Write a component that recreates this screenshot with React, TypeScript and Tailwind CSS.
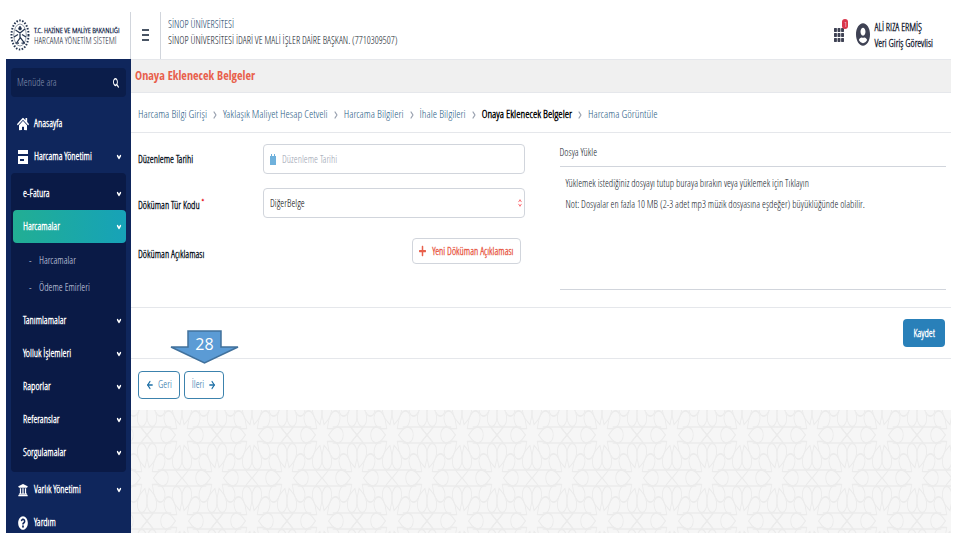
import React, { useState } from 'react';
import { FaSearch, FaHome, FaUniversity, FaQuestionCircle, FaUserCircle, FaPlus, FaTh } from 'react-icons/fa';
import { ArrowLeft, ArrowRight, ChevronDown, ChevronRight, ChevronsUpDown } from 'lucide-react';

const steps = [
  'Harcama Bilgi Girişi',
  'Yaklaşık Maliyet Hesap Cetveli',
  'Harcama Bilgileri',
  'İhale Bilgileri',
  'Onaya Eklenecek Belgeler',
  'Harcama Görüntüle',
];

const subMenus = ['Tanımlamalar', 'Yolluk İşlemleri', 'Raporlar', 'Referanslar', 'Sorgulamalar'];

function Emblem() {
  return (
    <svg viewBox="0 0 40 64" preserveAspectRatio="none" className="h-8 w-5 shrink-0" fill="none" stroke="#24344f">
      <ellipse cx="20" cy="32" rx="17" ry="29" strokeWidth="4" strokeDasharray="3 3" />
      <ellipse cx="20" cy="32" rx="12.5" ry="22" strokeWidth="1" />
      <path d="M20 14v8M11 22l9 6 10-8M20 26v12l-7 10M20 36l9 12M8 36l8-5M32 36l-8-5M11 48h7M23 48h7" strokeWidth="2.5" />
      <circle cx="20" cy="19" r="3" fill="#24344f" />
    </svg>
  );
}

function CardIcon() {
  return (
    <svg viewBox="0 0 10 14" preserveAspectRatio="none" className="h-3.5 w-2.5" fill="#fff">
      <path d="M0 0h10v4H0z" />
      <path fillRule="evenodd" d="M0 6h10v8H0zM2 9v2h4V9z" />
    </svg>
  );
}

type MenuRowProps = {
  label: string;
  icon?: React.ReactNode;
  active?: boolean;
  expandable?: boolean;
};

function MenuRow({ label, icon, active, expandable = true }: MenuRowProps) {
  return (
    <a
      href="#"
      className={`flex h-[33px] items-center pr-1 text-[10px] font-bold text-white ${icon ? 'pl-1.5' : 'pl-2.5'} ${
        active ? 'rounded-sm bg-gradient-to-r from-[#22ae93] to-[#17a2b8]' : ''
      }`}
    >
      {icon && <span className="mr-[5px] flex w-3 justify-center">{icon}</span>}
      <span className="flex-1">{label}</span>
      {expandable && <ChevronDown className="h-2.5 w-1.5" strokeWidth={5} preserveAspectRatio="none" />}
    </a>
  );
}

function Sidebar() {
  return (
    <aside className="w-[125px] shrink-0 overflow-hidden bg-[#0f265c] px-[5px] pt-[9px]">
      <div className="mb-2.5 flex h-[29px] items-center rounded-sm bg-[#0b1d4a] pl-1.5 pr-[7px]">
        <input
          type="text"
          aria-label="Menüde ara"
          placeholder="Menüde ara"
          className="min-w-0 flex-1 bg-transparent text-[10px] text-white outline-none placeholder:text-[#8592b0]"
        />
        <button type="button" aria-label="Ara">
          <FaSearch className="h-2.5 w-1.5 text-white" preserveAspectRatio="none" />
        </button>
      </div>
      <nav>
        <MenuRow
          label="Anasayfa"
          icon={<FaHome className="h-3.5 w-3 text-white" preserveAspectRatio="none" />}
          expandable={false}
        />
        <MenuRow label="Harcama Yönetimi" icon={<CardIcon />} />
        <div className="mb-px rounded-sm bg-[#0a1a46] pb-[3px] pl-0.5 pt-1">
          <MenuRow label="e-Fatura" />
          <MenuRow label="Harcamalar" active />
          <ul className="pb-[3px] pt-1 text-[10px] text-[#d5dbe8]">
            {['Harcamalar', 'Ödeme Emirleri'].map((item) => (
              <li key={item}>
                <a href="#" className="flex h-[27px] items-center pl-4">
                  <span className="w-2.5">-</span>
                  {item}
                </a>
              </li>
            ))}
          </ul>
          {subMenus.map((m) => (
            <MenuRow key={m} label={m} />
          ))}
        </div>
        <MenuRow
          label="Varlık Yönetimi"
          icon={<FaUniversity className="h-3.5 w-2.5 text-white" preserveAspectRatio="none" />}
        />
        <MenuRow
          label="Yardım"
          icon={<FaQuestionCircle className="h-3.5 w-2.5 text-white" preserveAspectRatio="none" />}
          expandable={false}
        />
      </nav>
    </aside>
  );
}

function Header() {
  return (
    <header className="flex h-[47px] shrink-0 items-stretch">
      <div className="flex w-[125px] shrink-0 items-center gap-1 whitespace-nowrap border-r border-gray-300 pb-0.5 pl-1">
        <Emblem />
        <div className="leading-[11px]">
          <div className="text-[8px] font-bold text-[#14264a]">T.C. HAZİNE VE MALİYE BAKANLIĞI</div>
          <div className="text-[9px] text-gray-800">HARCAMA YÖNETİM SİSTEMİ</div>
        </div>
      </div>
      <button
        type="button"
        aria-label="Menü"
        className="flex w-[30px] shrink-0 flex-col items-center justify-center gap-[3px] border-r border-gray-300 pb-0.5"
      >
        <span className="h-0.5 w-[7px] bg-gray-600" />
        <span className="h-0.5 w-[7px] bg-gray-600" />
        <span className="h-0.5 w-[7px] bg-gray-600" />
      </button>
      <div className="flex-1 pl-[7px] pt-1 text-[10px] leading-4">
        <div className="text-[#123e66]">SİNOP ÜNİVERSİTESİ</div>
        <div className="text-gray-900">SİNOP ÜNİVERSİTESİ İDARİ VE MALİ İŞLER DAİRE BAŞKAN. (7710309507)</div>
      </div>
      <div className="flex items-center gap-3 pb-0.5 pr-[18px]">
        <button type="button" aria-label="Uygulamalar" className="relative">
          <FaTh className="h-4 w-2.5 text-[#3f4254]" preserveAspectRatio="none" />
          <span className="absolute -right-1 -top-2 flex h-2.5 w-1.5 items-center justify-center rounded-full bg-[#d9364c] text-[8px] text-white">
            1
          </span>
        </button>
        <button type="button" className="flex items-center gap-1 text-left text-[10px] leading-4 text-gray-800">
          <FaUserCircle className="h-[23px] w-3.5 text-[#3f4254]" preserveAspectRatio="none" />
          <span className="block">
            <span className="block font-bold">ALİ RIZA ERMİŞ</span>
            <span className="block font-bold">Veri Giriş Görevlisi</span>
          </span>
        </button>
      </div>
    </header>
  );
}

// Ten-fold rosettes on a rhombic lattice
function Pattern() {
  const centers = [[0, 0], [70, 0], [35, 43], [0, 86], [70, 86]];
  const turns = [0, 36, 72, 108, 144, 180, 216, 252, 288, 324];
  return (
    <svg className="h-full w-full" aria-hidden="true">
      <defs>
        <pattern id="stars" width="70" height="86" x="51" y="25" patternUnits="userSpaceOnUse">
          {centers.map(([x, y]) => (
            <g
              key={x + '-' + y}
              transform={`translate(${x} ${y}) scale(0.59 1)`}
              fill="none"
              stroke="#ebebeb"
              strokeWidth="1.5"
            >
              <path d="M-60 -8H-18M18 -8H60M-60 8H-18M18 8H60" />
              <path d="M48 -8L70 8M48 8L70 -8M-48 -8L-70 8M-48 8L-70 -8" />
              {turns.map((a) => (
                <path
                  key={a}
                  transform={`rotate(${a})`}
                  d="M11 0L19 -6Q23 -8 28 -8Q36 -6 36 0Q36 6 28 8Q23 8 19 6Z"
                />
              ))}
            </g>
          ))}
        </pattern>
      </defs>
      <rect width="100%" height="100%" fill="#f6f6f6" />
      <rect width="100%" height="100%" fill="url(#stars)" />
    </svg>
  );
}

function FormPanel() {
  const [date, setDate] = useState('');
  return (
    <form className="flex flex-col" onSubmit={(e) => e.preventDefault()}>
      <div className="flex h-[175px] gap-[35px] border-b border-gray-200 pl-[7px] pr-[5px]">
        <div className="flex min-w-0 flex-1 flex-col pt-[11px] text-[10px] text-gray-900">
          <div className="mb-3.5 flex h-[30px] items-center">
            <label htmlFor="tarih" className="w-[125px] font-bold">Düzenleme Tarihi</label>
            <div className="flex h-full flex-1 items-center gap-1.5 rounded-sm border border-gray-300 px-1.5">
              <svg viewBox="0 0 6 11" className="h-[11px] w-1.5" fill="#6fb1dc">
                <path d="M0 2h1V0h1v2h2V0h1v2h1v9H0z" />
              </svg>
              <input
                id="tarih"
                type="text"
                placeholder="Düzenleme Tarihi"
                value={date}
                onChange={(e) => setDate(e.target.value)}
                className="min-w-0 flex-1 outline-none placeholder:text-gray-400"
              />
            </div>
          </div>
          <div className="mb-5 flex h-[30px] items-center">
            <label htmlFor="tur" className="w-[125px] pt-1 font-bold">
              Döküman Tür Kodu <sup className="text-red-600">*</sup>
            </label>
            <div className="relative h-full flex-1">
              <select id="tur" className="h-full w-full appearance-none rounded-sm border border-gray-300 px-1.5 text-black">
                <option>DiğerBelge</option>
              </select>
              <ChevronsUpDown
                className="pointer-events-none absolute right-0.5 top-2.5 h-2.5 w-1.5 text-red-500"
                preserveAspectRatio="none"
              />
            </div>
          </div>
          <div className="flex h-[26px] items-center justify-between pr-1">
            <span className="pt-1.5 font-bold">Döküman Açıklaması</span>
            <button
              type="button"
              className="flex h-full items-center gap-1.5 rounded-sm border border-gray-300 px-1.5 font-bold text-[#e8604c]"
            >
              <FaPlus className="h-3 w-[7px]" preserveAspectRatio="none" />
              Yeni Döküman Açıklaması
            </button>
          </div>
        </div>
        <section className="flex h-[157px] min-w-0 flex-1 flex-col border-b border-gray-300 pt-3 text-[10px] text-gray-900">
          <h2 className="border-b border-gray-300 pb-1.5">Dosya Yükle</h2>
          <div className="pl-1.5 pt-1.5 leading-[21px]">
            <p>Yüklemek istediğiniz dosyayı tutup buraya bırakın veya yüklemek için Tıklayın</p>
            <p>Not: Dosyalar en fazla 10 MB (2-3 adet mp3 müzik dosyasına eşdeğer) büyüklüğünde olabilir.</p>
          </div>
        </section>
      </div>
      <div className="flex h-[51px] items-center justify-end border-b border-gray-200 pr-1.5">
        <button type="submit" className="h-7 rounded-sm bg-[#2980b9] px-2.5 text-[10px] font-bold text-white">
          Kaydet
        </button>
      </div>
    </form>
  );
}

export default function App() {
  return (
    <div className="flex h-screen flex-col overflow-hidden bg-white pb-[7px] pl-1.5 pr-[9px] pt-3 font-['Open_Sans_Condensed_Light','Open_Sans',sans-serif]">
      <Header />
      <div className="flex min-h-0 flex-1">
        <Sidebar />
        <main className="flex min-w-0 flex-1 flex-col">
          <h1 className="flex h-[34px] shrink-0 items-center border-y border-gray-200 bg-[#f0f0f0] pl-1 font-['Open_Sans_Condensed','Open_Sans',sans-serif] text-xs font-bold text-[#e8604c]">
            Onaya Eklenecek Belgeler
          </h1>
          <nav
            aria-label="Adımlar"
            className="flex h-10 shrink-0 items-center gap-1 whitespace-nowrap border-b border-gray-200 pl-[7px] pt-1 text-[11px]"
          >
            {steps.map((s, i) => (
              <React.Fragment key={s}>
                {i > 0 && (
                  <ChevronRight className="h-3 w-2 text-gray-400" preserveAspectRatio="none" strokeWidth={3} />
                )}
                <a href="#" className={i === 4 ? 'font-bold text-black' : 'text-[#1f5b85]'}>{s}</a>
              </React.Fragment>
            ))}
          </nav>
          <FormPanel />
          <div className="relative flex h-[51px] shrink-0 items-center gap-1 pl-[7px] text-[10px] text-[#1b6ea5]">
            <button type="button" className="flex h-7 items-center gap-1 rounded-sm border border-[#3c82ad] px-[7px]">
              <ArrowLeft className="h-3 w-2" preserveAspectRatio="none" strokeWidth={3} />
              Geri
            </button>
            <button type="button" className="flex h-7 items-center gap-1 rounded-sm border border-[#3c82ad] px-[7px]">
              İleri
              <ArrowRight className="h-3 w-2" preserveAspectRatio="none" strokeWidth={3} />
            </button>
            <div className="absolute -top-[29px] left-[38px] h-[34px] w-[71px]">
              <svg viewBox="0 0 71 34" className="absolute inset-0" fill="#5b9bd5" stroke="#41719c" strokeWidth="1.5">
                <path d="M19 1H52V17H69L35.5 33L2 17H19Z" />
              </svg>
              <span className="relative block pt-0.5 text-center font-['Open_Sans',sans-serif] text-base text-white">28</span>
            </div>
          </div>
          <div className="min-h-0 flex-1">
            <Pattern />
          </div>
        </main>
      </div>
    </div>
  );
}
